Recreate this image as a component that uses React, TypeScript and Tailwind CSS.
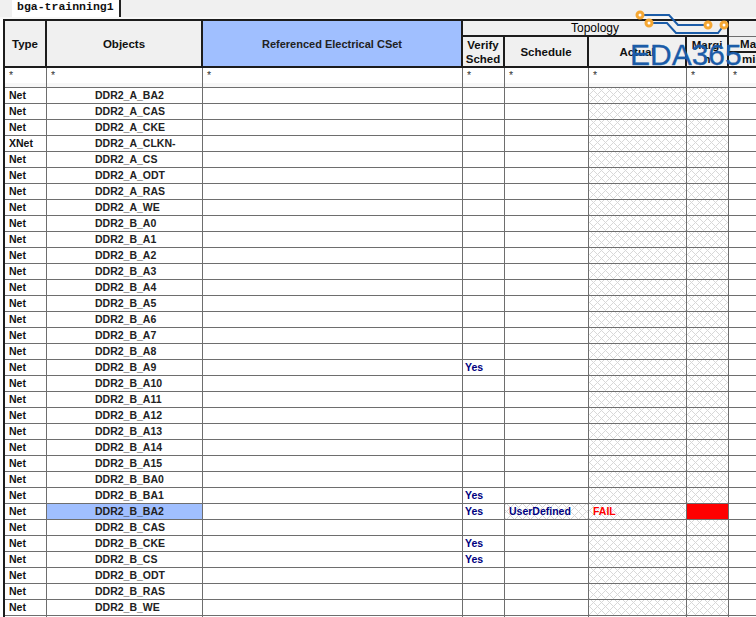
import React from 'react';

const names = [
  'DDR2_A_BA2', 'DDR2_A_CAS', 'DDR2_A_CKE', 'DDR2_A_CLKN-', 'DDR2_A_CS', 'DDR2_A_ODT', 'DDR2_A_RAS', 'DDR2_A_WE',
  'DDR2_B_A0', 'DDR2_B_A1', 'DDR2_B_A2', 'DDR2_B_A3', 'DDR2_B_A4', 'DDR2_B_A5', 'DDR2_B_A6', 'DDR2_B_A7',
  'DDR2_B_A8', 'DDR2_B_A9', 'DDR2_B_A10', 'DDR2_B_A11', 'DDR2_B_A12', 'DDR2_B_A13', 'DDR2_B_A14', 'DDR2_B_A15',
  'DDR2_B_BA0', 'DDR2_B_BA1', 'DDR2_B_BA2', 'DDR2_B_CAS', 'DDR2_B_CKE', 'DDR2_B_CS', 'DDR2_B_ODT', 'DDR2_B_RAS', 'DDR2_B_WE',
];
const verified = ['DDR2_B_A9', 'DDR2_B_BA1', 'DDR2_B_BA2', 'DDR2_B_CKE', 'DDR2_B_CS'];
const selected = 'DDR2_B_BA2';

const head = 'bg-[#f0f0f0] border-r-2 border-b-2 border-[#1c1c1c] text-center align-middle font-bold text-[#111] text-[11.5px] leading-[14px] p-0';
const cell = 'h-4 p-0 border-r border-b border-[#6e6e6e] text-[10.5px] leading-[15px] overflow-hidden whitespace-nowrap';
const filter = 'h-5 p-0 pl-1 border-r border-b border-[#6e6e6e] align-top text-[#333] leading-[14px] bg-[linear-gradient(#fff_15px,#f7f7f7_15px)]';
const hatch = 'bg-[repeating-linear-gradient(45deg,#d8d8d8_0_1px,transparent_1px_5.66px),repeating-linear-gradient(-45deg,#d8d8d8_0_1px,transparent_1px_5.66px)]';

const Watermark = () => (
  <div className="absolute left-[630px] top-[8px] w-[126px] h-[62px] pointer-events-none">
    <svg width="126" height="36" viewBox="630 8 126 36" className="absolute left-0 top-0" fill="none">
      <path d="M640 15H669L678 25H708" stroke="#1b5ca8" strokeWidth="2" />
      <path d="M649 23H667L676 33H718L724 25" stroke="#1b5ca8" strokeWidth="2" />
      <circle cx="640" cy="15" r="3" fill="#fff" stroke="#f5a733" strokeWidth="3" />
      <circle cx="649" cy="23" r="3" fill="#fff" stroke="#f5a733" strokeWidth="3" />
      <circle cx="708" cy="25" r="3" fill="#fff" stroke="#f5a733" strokeWidth="3" />
      <circle cx="724" cy="25" r="3" fill="#fff" stroke="#f5a733" strokeWidth="3" />
    </svg>
    <span className="absolute left-0 top-[30px] text-[30px] leading-[34px] text-[#1b5ca8] [-webkit-text-stroke:0.3px_#1b5ca8] font-['Liberation_Sans',sans-serif]">EDA365</span>
  </div>
);

export default function App() {
  return (
    <div className="relative w-[756px] h-[617px] overflow-hidden bg-white font-['Liberation_Sans',Arial,sans-serif] text-[10.5px]">
      <div className="h-[17px] bg-[#f0f0f0] pl-3 flex">
        <div className="w-[109px] h-[17px] bg-white border-r-2 border-[#222] pl-[5px] font-['Liberation_Mono',monospace] font-bold text-[11.5px] leading-[13px] text-[#111]">
          bga-trainning1
        </div>
      </div>
      <div className="h-[2px] bg-[#f8f8f8]" />
      <div className="ml-[3px] w-[753px] overflow-hidden border-l-2 border-t-2 border-[#1c1c1c]">
        <table className="table-fixed border-separate border-spacing-0 w-[784px]">
          <colgroup>
            <col className="w-[42px]" />
            <col className="w-[156px]" />
            <col className="w-[260px]" />
            <col className="w-[42px]" />
            <col className="w-[84px]" />
            <col className="w-[98px]" />
            <col className="w-[42px]" />
            <col className="w-[60px]" />
          </colgroup>
          <thead>
            <tr>
              <th rowSpan={2} className={head}>Type</th>
              <th rowSpan={2} className={head}>Objects</th>
              <th rowSpan={2} className={`${head} !bg-[#a0bfff] !text-[11px] text-[#222]`}>Referenced Electrical CSet</th>
              <th colSpan={4} className={`${head} h-4 !font-normal !text-[12px] text-black`}>Topology</th>
              <th className="h-4 bg-[#f0f0f0] border-b border-[#6e6e6e]" />
            </tr>
            <tr>
              <th className={`${head} h-[31px]`}>Verify<br />Sched</th>
              <th className={head}>Schedule</th>
              <th className={head}>Actual</th>
              <th className={`${head} overflow-hidden`}>Margi<br />n</th>
              <th className={`${head} border-r-0 text-left align-top overflow-hidden`}>
                <div className="h-[16px] border-b-2 border-[#1c1c1c] pl-[11px] leading-[14px] whitespace-nowrap">Max</div>
                <div className="pl-[13px] leading-[13px] whitespace-nowrap">min</div>
              </th>
            </tr>
          </thead>
          <tbody>
            <tr>
              {[0, 1, 2, 3, 4, 5, 6, 7].map((i) => (
                <td key={i} className={filter}>*</td>
              ))}
            </tr>
            {names.map((name) => {
              const isSel = name === selected;
              return (
                <tr key={name}>
                  <td className={`${cell} pl-1 font-bold text-[#111]`}>{name === 'DDR2_A_CLKN-' ? 'XNet' : 'Net'}</td>
                  <td className={`${cell} pl-[48px] font-bold text-[#222] ${isSel ? 'bg-[#a0bfff]' : ''}`}>{name}</td>
                  <td className={cell} />
                  <td className={`${cell} pl-[2px] font-bold text-[#000080]`}>{verified.includes(name) ? 'Yes' : ''}</td>
                  <td className={`${cell} pl-1 font-bold text-[#000080] ${isSel ? hatch : ''}`}>{isSel ? 'UserDefined' : ''}</td>
                  <td className={`${cell} pl-1 font-bold text-[#ff0000] ${hatch}`}>{isSel ? 'FAIL' : ''}</td>
                  <td className={`${cell} ${isSel ? 'bg-[#ff0000]' : hatch}`} />
                  <td className={cell} />
                </tr>
              );
            })}
            <tr>
              {[0, 1, 2, 3, 4, 5, 6, 7].map((i) => (
                <td key={i} className={cell} />
              ))}
            </tr>
          </tbody>
        </table>
      </div>
      <Watermark />
    </div>
  );
}
